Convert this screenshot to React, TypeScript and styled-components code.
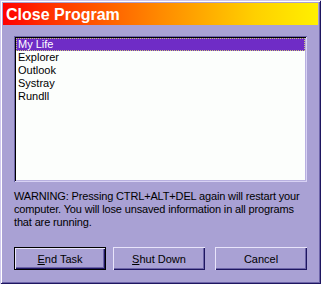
import React from "react";
import styled, { createGlobalStyle } from "styled-components";

const Global = createGlobalStyle`
  html, body { margin: 0; padding: 0; background: #a9a1d4; }
  * { box-sizing: border-box; }
`;

const Win = styled.div`
  width: 321px;
  height: 284px;
  background: #a9a1d4;
  padding: 3px;
  display: flex;
  flex-direction: column;
  box-shadow: inset 1px 1px #cfc8ee, inset -1px -1px #1e1660,
    inset 2px 2px #ffffff, inset -2px -2px #6c64a8;
  font-family: "Liberation Sans", Arial, sans-serif;
`;

const TitleBar = styled.div`
  height: 22px;
  background: linear-gradient(to right, #ff0000 0%, #ff2a00 12%, #ff8a00 50%, #ffd000 80%, #fff000 100%);
  color: #fff;
  font-weight: bold;
  font-size: 16px;
  display: flex;
  align-items: center;
  padding-left: 3px;
  padding-top: 1px;
`;

const Body = styled.div`
  flex: 1;
  display: flex;
  flex-direction: column;
  padding: 11px 11px 0 11px;
`;

const ListBox = styled.div`
  height: 146px;
  background: #fcfefc;
  padding: 2px;
  box-shadow: inset 1px 1px #6c64a8, inset -1px -1px #d8d2f4,
    inset 2px 2px #000000, inset -2px -2px #b8b0e0;
  display: flex;
  flex-direction: column;
`;

const Item = styled.div<{ $sel?: boolean }>`
  height: 13px;
  line-height: 13px;
  font-size: 11px;
  padding-left: 2px;
  color: ${(p) => (p.$sel ? "#ffffff" : "#000000")};
  background: ${(p) => (p.$sel ? "#6f2cc6" : "transparent")};
  outline: ${(p) => (p.$sel ? "1px dotted #c8c878" : "none")};
  outline-offset: -1px;
  white-space: nowrap;
`;

const Warning = styled.p`
  margin: 8px 0 0 0;
  font-size: 11px;
  line-height: 13px;
  letter-spacing: -0.15px;
  color: #000;
  width: 296px;
`;

const Buttons = styled.div`
  margin-top: 18px;
  display: flex;
  gap: 0;
`;

const Btn = styled.button<{ $def?: boolean; $ml?: number }>`
  width: 92px;
  height: 23px;
  margin-left: ${(p) => p.$ml ?? 0}px;
  padding: 0;
  border: none;
  background: #a9a1d4;
  font-family: "Liberation Sans", Arial, sans-serif;
  font-size: 11px;
  color: #000;
  box-shadow: ${(p) =>
    p.$def
      ? "inset 1px 1px #000, inset -1px -1px #000, inset 2px 2px #e8e4fa, inset -2px -2px #1e1660, inset -3px -3px #6c64a8"
      : "inset 1px 1px #e8e4fa, inset -1px -1px #1e1660, inset -2px -2px #6c64a8"};
  u { text-decoration: underline; }
`;

export default function App() {
  return (
    <>
      <Global />
      <Win>
        <TitleBar>Close Program</TitleBar>
        <Body>
          <ListBox>
            <Item $sel>My Life</Item>
            <Item>Explorer</Item>
            <Item>Outlook</Item>
            <Item>Systray</Item>
            <Item>Rundll</Item>
          </ListBox>
          <Warning>
            WARNING: Pressing CTRL+ALT+DEL again will restart your computer. You will lose unsaved information in all programs that are running.
          </Warning>
          <Buttons>
            <Btn $def>
              <u>E</u>nd Task
            </Btn>
            <Btn $ml={7}>
              <u>S</u>hut Down
            </Btn>
            <Btn $ml={10}>Cancel</Btn>
          </Buttons>
        </Body>
      </Win>
    </>
  );
}
